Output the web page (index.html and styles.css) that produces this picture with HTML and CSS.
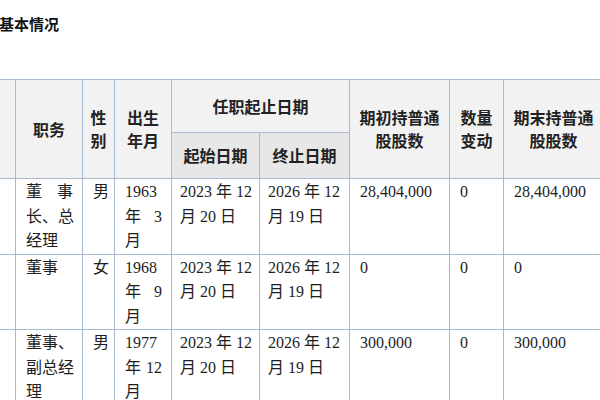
FILE: index.html
```html
<!DOCTYPE html>
<html lang="zh-CN">
<head>
<meta charset="utf-8">
<link rel="stylesheet" href="styles.css">
</head>
<body>
<div class="title">基本情况</div>
<table class="t">
  <colgroup>
    <col class="c0"><col class="c1"><col class="c2"><col class="c3"><col class="c4"><col class="c5"><col class="c6"><col class="c7"><col class="c8"><col class="c9">
  </colgroup>
  <thead>
    <tr class="h1">
      <th rowspan="2"></th>
      <th rowspan="2">职务</th>
      <th rowspan="2">性<br>别</th>
      <th rowspan="2">出生<br>年月</th>
      <th colspan="2">任职起止日期</th>
      <th rowspan="2">期初持普通<br>股股数</th>
      <th rowspan="2">数量<br>变动</th>
      <th rowspan="2">期末持普通<br>股股数</th>
      <th rowspan="2"></th>
    </tr>
    <tr class="h2">
      <th class="sub">起始日期</th>
      <th class="sub">终止日期</th>
    </tr>
  </thead>
  <tbody>
    <tr class="r">
      <td></td>
      <td><span class="j">董事</span><span class="j">长、总</span><span class="l">经理</span></td>
      <td>男</td>
      <td><span class="l">1963</span><span class="j">年 3</span><span class="l">月</span></td>
      <td><span class="l">2023 年 12</span><span class="l">月 20 日</span></td>
      <td><span class="l">2026 年 12</span><span class="l">月 19 日</span></td>
      <td>28,404,000</td>
      <td>0</td>
      <td>28,404,000</td>
      <td></td>
    </tr>
    <tr class="r">
      <td></td>
      <td>董事</td>
      <td>女</td>
      <td><span class="l">1968</span><span class="j">年 9</span><span class="l">月</span></td>
      <td><span class="l">2023 年 12</span><span class="l">月 20 日</span></td>
      <td><span class="l">2026 年 12</span><span class="l">月 19 日</span></td>
      <td>0</td>
      <td>0</td>
      <td>0</td>
      <td></td>
    </tr>
    <tr class="r">
      <td></td>
      <td><span class="l">董事、</span><span class="j">副总经</span><span class="l">理</span></td>
      <td>男</td>
      <td><span class="l">1977</span><span class="j">年 12</span><span class="l">月</span></td>
      <td><span class="l">2023 年 12</span><span class="l">月 20 日</span></td>
      <td><span class="l">2026 年 12</span><span class="l">月 19 日</span></td>
      <td>300,000</td>
      <td>0</td>
      <td>300,000</td>
      <td></td>
    </tr>
  </tbody>
</table>
</body>
</html>
```
FILE: styles.css
```css
html, body {
  margin: 0;
  padding: 0;
  background: #ffffff;
  overflow: hidden;
  width: 600px;
  height: 400px;
}
body {
  font-family: "Liberation Serif", "Noto Sans CJK SC", serif;
  color: #1e1e1e;
}
.title {
  font-family: "Noto Sans CJK SC", sans-serif;
  font-weight: bold;
  font-size: 15px;
  line-height: 20px;
  padding-top: 14px;
  margin-left: -1px;
  height: 79px;
  box-sizing: border-box;
  color: #111;
}
.t {
  border-collapse: collapse;
  table-layout: fixed;
  margin-left: -25px;
  width: 678px;
}
.c0 { width: 40px; }
.c1 { width: 67px; }
.c2 { width: 32px; }
.c3 { width: 57px; }
.c4 { width: 88px; }
.c5 { width: 90px; }
.c6 { width: 100px; }
.c7 { width: 54px; }
.c8 { width: 100px; }
.c9 { width: 50px; }
.t th, .t td {
  border: 1px solid #a8bacb;
  padding: 0;
  overflow: hidden;
  white-space: nowrap;
}
.t th {
  background: #f2f2f2;
  font-family: "Noto Sans CJK SC", sans-serif;
  font-weight: bold;
  font-size: 16px;
  line-height: 23px;
  text-align: center;
  vertical-align: middle;
  color: #222;
}
.t th.sub {
  background: #e7e7e7;
}
.h1 { height: 53px; }
.h2 { height: 46px; }
.r { height: 74px; }
.t td {
  font-size: 16px;
  line-height: 24.5px;
  vertical-align: top;
  text-align: left;
  padding: 1px 9px 0 10px;
}
.t td:nth-child(5), .t td:nth-child(6) {
  padding-left: 8px;
  padding-right: 6px;
}
.j {
  display: block;
  text-align: justify;
  text-align-last: justify;
}
.l {
  display: block;
}
```
